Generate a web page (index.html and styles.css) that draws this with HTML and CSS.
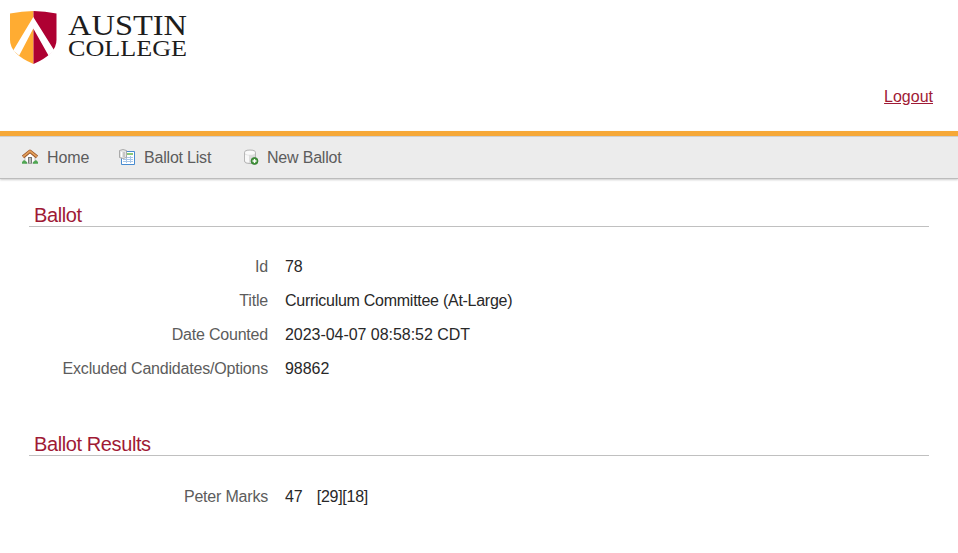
FILE: index.html
```html
<!DOCTYPE html>
<html lang="en">
<head>
<meta charset="utf-8">
<title>Ballot</title>
<link rel="stylesheet" href="styles.css">
</head>
<body>
<header class="header">
  <svg class="logo" width="190" height="70" viewBox="0 0 190 70" role="img" aria-label="Austin College">
    <path fill="#ffac32" d="M10 13.500Q22 11 33.500 11V64Q10 54 10 40Z"/>
    <path fill="#ae0132" d="M33.500 11Q45 11 56.500 13.500V40Q56.500 54 33.500 64Z"/>
    <path fill="#fff" d="M33.300 17L54.300 50.500L48.500 55.500L33.300 28.500L19.200 55.500L13.200 50.500Z"/>
    <text class="logo-top" x="68" y="34.500" textLength="119" lengthAdjust="spacingAndGlyphs">AUSTIN</text>
    <text class="logo-bottom" x="68" y="55.800" textLength="119" lengthAdjust="spacingAndGlyphs">COLLEGE</text>
  </svg>
  <a class="logout" href="#">Logout</a>
</header>
<nav class="nav">
  <a class="nav-item home" href="#">
    <svg width="16" height="16" viewBox="0 0 16 16">
      <path fill="#fff" stroke="#aaa" stroke-width=".7" d="M3 8L8 4L13 8V14H3Z"/>
      <path fill="#777" d="M6 8H10V14.500H6Z"/><path fill="#bbb" d="M7 9H9V14H7Z"/>
      <path fill="none" stroke="#9d5528" stroke-width="3.400" stroke-linejoin="round" d="M1 8L8 2.300L15 8"/>
      <path fill="none" stroke="#e3a15d" stroke-width="1.800" d="M1.200 7.600L8 2.100L14.800 7.600"/>
      <path fill="#50a653" d="M0 14.800V13L2 11L5 13V14.800ZM11 14.800V13L14 11L16 13V14.800Z"/>
    </svg>
    <span>Home</span>
  </a>
  <a class="nav-item list" href="#">
    <svg width="16" height="16" viewBox="0 0 16 16">
      <path fill="#fff" stroke="#478bd0" d="M2.500 2.500H15.500V15.500H2.500Z"/>
      <path fill="#8bc779" d="M8 4H14V6H8Z"/>
      <path fill="none" stroke="#a9c7e8" d="M4 8.500H14M4 10.500H14M4 12.500H14M7.500 7V14M11.500 7V14"/>
      <path fill="#e5e5e5" stroke="#999" stroke-width=".8" d="M.500 1.500Q4 -.500 7.500 1.500V8.500Q4 10.500 .500 8.500Z"/>
      <path fill="none" stroke="#fff" d="M2.500 3V8"/><path fill="none" stroke="#aaa" d="M5 3V8"/>
    </svg>
    <span>Ballot List</span>
  </a>
  <a class="nav-item new" href="#">
    <svg width="16" height="16" viewBox="0 0 16 16">
      <path fill="#ddd" stroke="#aaa" stroke-width=".8" d="M1.500 3.500Q1.500 1 7 1T12.500 3.500V12Q12.500 14.500 7 14.500T1.500 12Z"/>
      <path fill="#f8f8f8" d="M2 5.500Q4 6.500 6 6.500V13.500Q3 13.500 2 12Z"/>
      <ellipse cx="7" cy="3.700" rx="5" ry="2" fill="#fafafa"/>
      <circle cx="11.500" cy="12" r="3.500" fill="#419239" stroke="#2c782b" stroke-width=".7"/>
      <path stroke="#fff" stroke-width="1.400" d="M9.500 12H13.500M11.500 10V14"/>
    </svg>
    <span>New Ballot</span>
  </a>
</nav>
<main class="main">
  <section class="section">
    <h1 class="title">Ballot</h1>
    <dl class="fields">
      <dt>Id</dt><dd class="number">78</dd>
      <dt>Title</dt><dd>Curriculum Committee (At-Large)</dd>
      <dt>Date Counted</dt><dd class="number">2023-04-07 08:58:52 CDT</dd>
      <dt>Excluded Candidates/Options</dt><dd class="number">98862</dd>
    </dl>
  </section>
  <section class="section results">
    <h1 class="title">Ballot Results</h1>
    <dl class="fields">
      <dt>Peter Marks</dt><dd><span class="number">47</span><span class="rounds">[29][18]</span></dd>
    </dl>
  </section>
</main>
</body>
</html>
```
FILE: styles.css
```css
body {
  margin: 0;
  background: #fff;
  color: #282828;
  font: 300 16px/20px "Liberation Sans", Arial, sans-serif;
}
.header {
  display: flex;
  justify-content: space-between;
  height: 131px;
}
.logo {
  display: block;
  fill: #1d1d1d;
  font-family: "Liberation Serif", serif;
}
.logo-top { font-size: 30px; }
.logo-bottom { font-size: 24px; }
.logout {
  margin: 87px 25px 0 0;
  height: 20px;
  color: #9f1a35;
}
.nav {
  display: flex;
  height: 42px;
  padding-left: 22px;
  border-top: 5px solid #f6a838;
  border-bottom: 1px solid #bcbcbc;
  background: #ececec;
  box-shadow: 0 1px 2px #ccc, inset 0 1px 0 #d0d0d0;
}
.nav-item {
  display: flex;
  align-items: center;
  gap: 9px;
  color: #5c5c5c;
  letter-spacing: -.2px;
  text-decoration: none;
}
.nav-item span { padding-top: 2px; }
.home {
  width: 97px;
  letter-spacing: -.1px;
}
.list { width: 124px; }
.new { gap: 8px; }
.main { padding: 25px 29px 0; }
.section { height: 229px; }
.results { height: 100px; }
.title {
  box-sizing: border-box;
  height: 23px;
  margin: 0;
  padding-left: 5px;
  border-bottom: 1px solid #c0c0c0;
  color: #9f1a35;
  font-size: 20px;
  font-weight: 300;
  letter-spacing: -.4px;
  line-height: 22px;
}
.fields {
  display: grid;
  grid-template-columns: 239px 1fr;
  column-gap: 17px;
  grid-auto-rows: 34px;
  margin: 23px 0 0;
  line-height: 34px;
  white-space: nowrap;
}
.results .fields { margin-top: 24px; }
dt {
  color: #5c5c5c;
  letter-spacing: -.2px;
  text-align: right;
}
dd {
  margin: 0;
  letter-spacing: -.27px;
}
.number { letter-spacing: -.04px; }
.rounds { margin-left: 14px; }
```
